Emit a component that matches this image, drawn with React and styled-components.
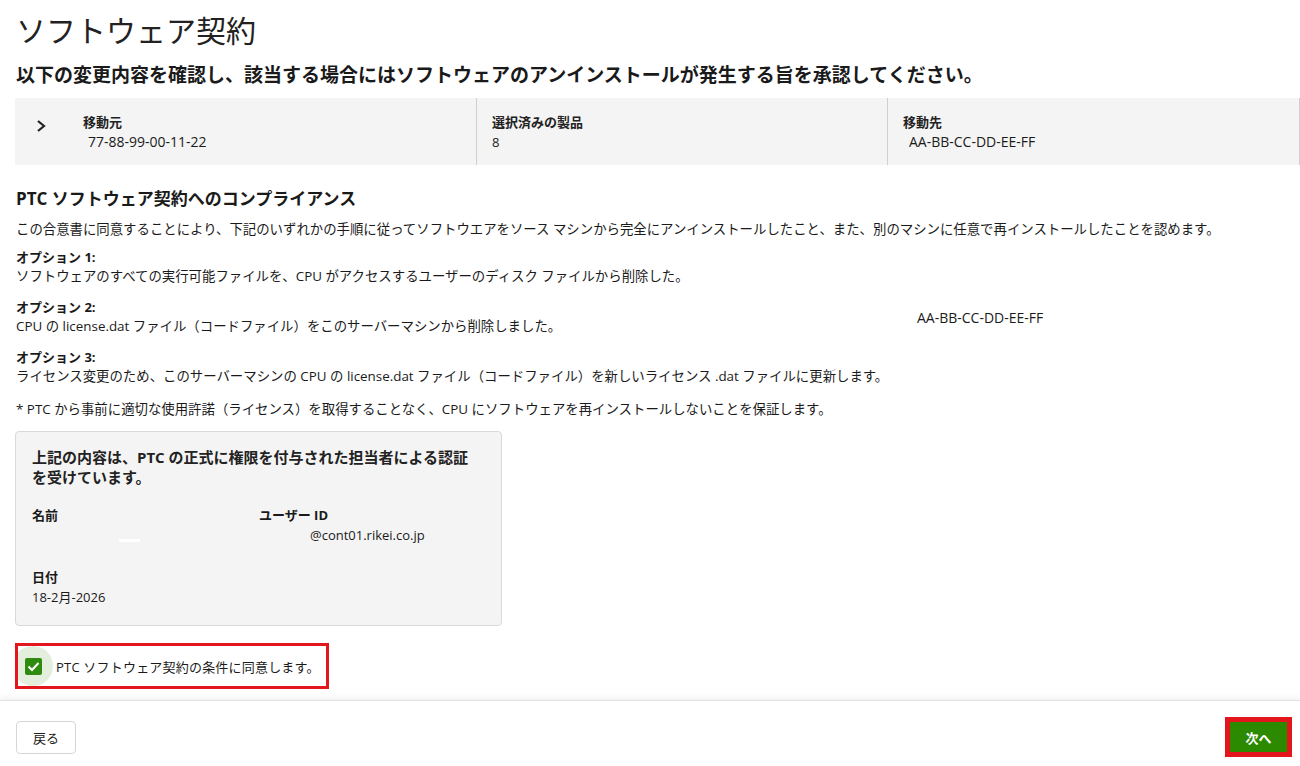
import React from 'react';
import styled, { createGlobalStyle } from 'styled-components';

const GlobalStyle = createGlobalStyle`
  html, body {
    margin: 0;
    padding: 0;
    background: #fff;
  }
  body {
    font-family: "Open Sans", "Noto Sans CJK JP", sans-serif;
    color: #1a1a1a;
  }
`;

const Page = styled.div`
  height: 766px;
  display: flex;
  flex-direction: column;
  overflow: hidden;
`;

const Main = styled.main`
  flex: 1;
  padding: 0 0 0 15px;
  overflow: hidden;
`;

const Title = styled.h1`
  margin: 11px 0 0 1px;
  font-size: 30px;
  line-height: 40px;
  font-weight: 400;
  color: #222;
`;

const SubTitle = styled.h2`
  margin: 12px 0 0 1px;
  font-size: 19px;
  line-height: 24px;
  font-weight: 700;
  color: #1a1a1a;
`;

const Summary = styled.div`
  margin-top: 11px;
  display: grid;
  grid-template-columns: 462px 411px 1fr;
  background: #f4f4f4;
  height: 67px;
`;

const SummaryCell = styled.div`
  display: flex;
  padding: 15px 16px 0 ${p => p.$pl ?? 15}px;
  border-right: 1px solid #cfcfcf;
`;

const Chevron = styled.div`
  width: 26px;
  margin: 3px 22px 0 20px;
  color: #222;
`;

const SumLabel = styled.div`
  font-size: 13px;
  line-height: 18px;
  font-weight: 700;
  color: #222;
`;

const SumValue = styled.div`
  font-size: ${p => p.$small ? 13 : 14}px;
  line-height: 20px;
  padding-left: ${p => p.$indent || 0}px;
  margin-top: 1px;
  color: #1a1a1a;
`;

const SectionHead = styled.h3`
  margin: 22px 0 0 1px;
  font-size: 17px;
  line-height: 24px;
  font-weight: 700;
`;

const Para = styled.p`
  margin: ${p => p.$mt || 0}px 0 0 1px;
  font-size: 13.4px;
  line-height: 19px;
`;

const Option = styled.div`
  margin: ${p => p.$mt}px 0 0 1px;
  display: grid;
  grid-template-columns: 901px 1fr;
  align-items: center;
`;

const OptLabel = styled.div`
  font-size: 13px;
  line-height: 19px;
  font-weight: 700;
`;

const OptText = styled.div`
  font-size: 13.4px;
  line-height: 19px;
`;

const FloatValue = styled.div`
  font-size: 14px;
  color: #1a1a1a;
`;

const Card = styled.div`
  margin-top: 12px;
  width: 445px;
  background: #f4f4f4;
  border: 1px solid #d9d9d9;
  border-radius: 4px;
  padding: 15px 24px 18px 16px;
`;

const CardHead = styled.div`
  font-size: 15px;
  line-height: 20px;
  font-weight: 700;
  color: #222;
`;

const CardGrid = styled.div`
  margin-top: 19px;
  display: grid;
  grid-template-columns: 227px 1fr;
  row-gap: 23px;
`;

const FieldLabel = styled.div`
  font-size: 13px;
  line-height: 19px;
  font-weight: 700;
`;

const FieldValue = styled.div`
  font-size: 13px;
  line-height: 19px;
  min-height: 19px;
  margin-top: 1px;
  padding-left: ${p => p.$indent || 0}px;
  position: relative;
`;

const Redacted = styled.span`
  position: absolute;
  left: 87px;
  top: 13px;
  width: 21px;
  height: 3px;
  background: #fff;
`;

const AgreeBox = styled.label`
  margin-top: 17px;
  width: 308px;
  height: 40px;
  border: 3px solid #e3161e;
  display: flex;
  align-items: center;
  overflow: hidden;
`;

const Halo = styled.span`
  width: 40px;
  height: 40px;
  border-radius: 50%;
  background: #e4eedd;
  margin-left: -5px;
  display: flex;
  align-items: center;
  justify-content: center;
  flex-shrink: 0;
`;

const Check = styled.span`
  width: 17px;
  height: 17px;
  border-radius: 2px;
  background: #2f8a10;
  display: flex;
  align-items: center;
  justify-content: center;
`;

const AgreeText = styled.span`
  margin-left: 3px;
  font-size: 13px;
  letter-spacing: 0.2px;
  color: #1a1a1a;
`;

const Footer = styled.footer`
  height: 66px;
  flex-shrink: 0;
  border-top: 1px solid #e2e2e2;
  box-shadow: 0 -3px 5px rgba(0, 0, 0, 0.05);
  display: flex;
  justify-content: space-between;
  align-items: flex-start;
  padding: 16px 8px 0 16px;
  box-sizing: border-box;
`;

const BackButton = styled.button`
  margin-top: 4px;
  width: 60px;
  height: 33px;
  background: #fff;
  border: 1px solid #d6d6d6;
  border-radius: 4px;
  font-family: "Noto Sans CJK JP", sans-serif;
  font-size: 13px;
  color: #222;
`;

const NextFrame = styled.div`
  border: 5px solid #e3161e;
  display: flex;
`;

const NextButton = styled.button`
  width: 57px;
  height: 30px;
  background: #2b8a00;
  border: none;
  border-radius: 0;
  color: #fff;
  font-family: "Noto Sans CJK JP", sans-serif;
  font-weight: 700;
  font-size: 13px;
`;

export default function App() {
  return (
    <Page>
      <GlobalStyle />
      <Main>
        <Title>ソフトウェア契約</Title>
        <SubTitle>以下の変更内容を確認し、該当する場合にはソフトウェアのアンインストールが発生する旨を承認してください。</SubTitle>

        <Summary>
          <SummaryCell $pl={0}>
            <Chevron>
              <svg width="12" height="14" viewBox="0 0 12 14">
                <path d="M3 2l6 5-6 5" fill="none" stroke="#222" strokeWidth="2.2" />
              </svg>
            </Chevron>
            <div>
              <SumLabel>移動元</SumLabel>
              <SumValue $indent={5}>77-88-99-00-11-22</SumValue>
            </div>
          </SummaryCell>
          <SummaryCell>
            <div>
              <SumLabel>選択済みの製品</SumLabel>
              <SumValue $small>8</SumValue>
            </div>
          </SummaryCell>
          <SummaryCell>
            <div>
              <SumLabel>移動先</SumLabel>
              <SumValue $indent={6}>AA-BB-CC-DD-EE-FF</SumValue>
            </div>
          </SummaryCell>
        </Summary>

        <SectionHead>PTC ソフトウェア契約へのコンプライアンス</SectionHead>
        <Para $mt={9}>この合意書に同意することにより、下記のいずれかの手順に従ってソフトウエアをソース マシンから完全にアンインストールしたこと、また、別のマシンに任意で再インストールしたことを認めます。</Para>

        <Option $mt={9}>
          <div>
            <OptLabel>オプション 1:</OptLabel>
            <OptText>ソフトウェアのすべての実行可能ファイルを、CPU がアクセスするユーザーのディスク ファイルから削除した。</OptText>
          </div>
        </Option>
        <Option $mt={12}>
          <div>
            <OptLabel>オプション 2:</OptLabel>
            <OptText>CPU の license.dat ファイル（コードファイル）をこのサーバーマシンから削除しました。</OptText>
          </div>
          <FloatValue>AA-BB-CC-DD-EE-FF</FloatValue>
        </Option>
        <Option $mt={12}>
          <div>
            <OptLabel>オプション 3:</OptLabel>
            <OptText>ライセンス変更のため、このサーバーマシンの CPU の license.dat ファイル（コードファイル）を新しいライセンス .dat ファイルに更新します。</OptText>
          </div>
        </Option>
        <Para $mt={14}>* PTC から事前に適切な使用許諾（ライセンス）を取得することなく、CPU にソフトウェアを再インストールしないことを保証します。</Para>

        <Card>
          <CardHead>上記の内容は、PTC の正式に権限を付与された担当者による認証を受けています。</CardHead>
          <CardGrid>
            <div>
              <FieldLabel>名前</FieldLabel>
              <FieldValue><Redacted /></FieldValue>
            </div>
            <div>
              <FieldLabel>ユーザー ID</FieldLabel>
              <FieldValue $indent={51}>@cont01.rikei.co.jp</FieldValue>
            </div>
            <div>
              <FieldLabel>日付</FieldLabel>
              <FieldValue>18-2月-2026</FieldValue>
            </div>
          </CardGrid>
        </Card>

        <AgreeBox>
          <Halo>
            <Check>
              <svg width="13" height="11" viewBox="0 0 13 11">
                <path d="M1.5 5.5l3.5 3.5 6.5-7" fill="none" stroke="#fff" strokeWidth="2" />
              </svg>
            </Check>
          </Halo>
          <AgreeText>PTC ソフトウェア契約の条件に同意します。</AgreeText>
        </AgreeBox>
      </Main>
      <Footer>
        <BackButton>戻る</BackButton>
        <NextFrame>
          <NextButton>次へ</NextButton>
        </NextFrame>
      </Footer>
    </Page>
  );
}
